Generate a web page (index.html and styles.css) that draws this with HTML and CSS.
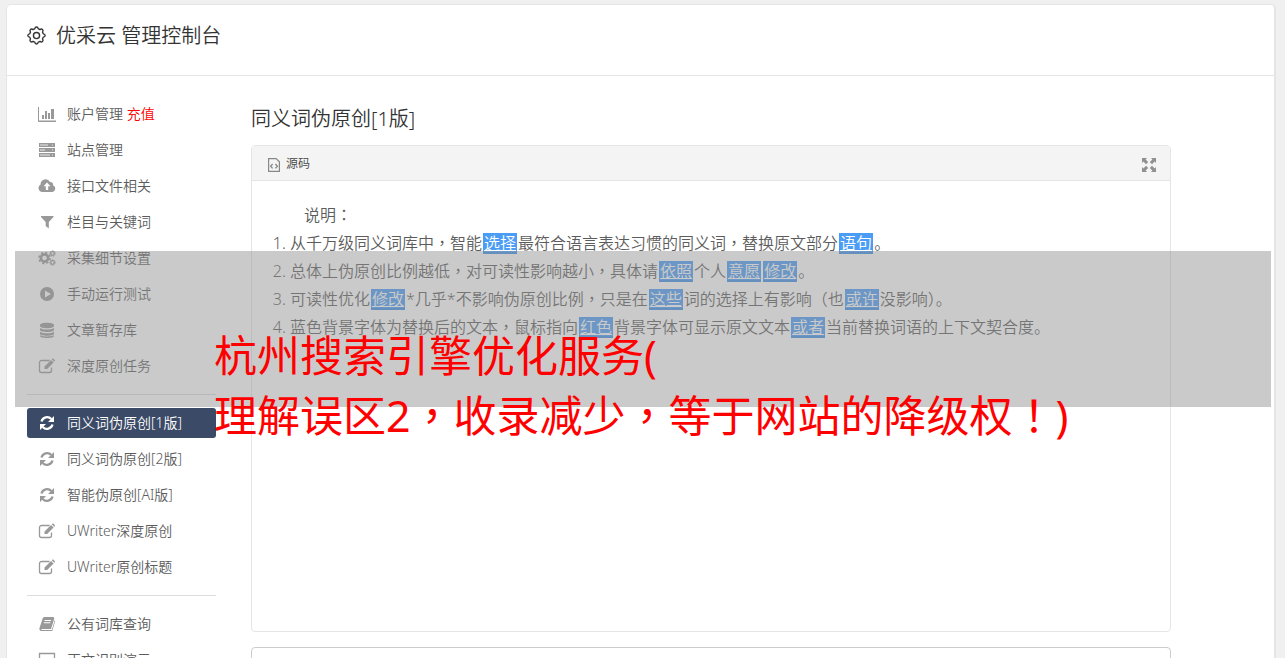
FILE: index.html
```html
<!DOCTYPE html>
<html lang="zh-CN">
<head>
  <meta charset="UTF-8">
  <title>优采云 管理控制台</title>
  <link rel="stylesheet" href="styles.css">
</head>
<body>

<!-- icons -->
<svg class="sprite" width="0" height="0">
  <symbol id="i-chart" viewBox="0 0 18 16"><path d="M.5 1v14.5H18M0 15h18" fill="none" stroke="currentColor"/><path d="M4 9h2v4H4zM7 5h2v8H7zM10 7h2v6h-2zM13 3h3v10h-3z"/></symbol>
  <symbol id="i-server" viewBox="0 0 18 16"><path d="M1 1h16v4H1zM1 6h16v4H1zM1 11h16v4H1z"/><path d="M2 3h8M2 8h5M2 13h10M14 3h1M14 8h1M14 13h1" stroke="#fff" opacity=".8"/></symbol>
  <symbol id="i-cloud" viewBox="0 0 18 16"><path fill-rule="evenodd" d="M4.500 14A4 4 0 0 1 2.600 6.500A5 5 0 0 1 12 4a2.700 2.700 0 0 1 3 3.300A3.500 3.500 0 0 1 14.500 14zM9 4.500 5.500 8.300h2.300V12h2.400V8.300h2.300z"/></symbol>
  <symbol id="i-filter" viewBox="0 0 18 16"><path d="M3 2h12.500v1l-4.700 5v6.500L7.700 12V8L3 3z"/></symbol>
  <symbol id="i-cogs" viewBox="0 0 18 16"><circle cx="6.500" cy="8" r="3.600" fill="none" stroke="currentColor" stroke-width="2.600"/><circle cx="6.500" cy="8" r="5.500" fill="none" stroke="currentColor" stroke-width="1.600" stroke-dasharray="2.160 2.160"/><circle cx="14.500" cy="3.500" r="1.800" fill="none" stroke="currentColor" stroke-width="1.300"/><circle cx="14.500" cy="3.500" r="2.800" fill="none" stroke="currentColor" stroke-dasharray="1.260 1.260"/><circle cx="14.500" cy="12.500" r="1.800" fill="none" stroke="currentColor" stroke-width="1.300"/><circle cx="14.500" cy="12.500" r="2.800" fill="none" stroke="currentColor" stroke-dasharray="1.260 1.260"/></symbol>
  <symbol id="i-play" viewBox="0 0 18 16"><path fill-rule="evenodd" d="M9 1a7 7 0 1 0 0 14A7 7 0 0 0 9 1zM7 4.500 13 8l-6 3.500z"/></symbol>
  <symbol id="i-db" viewBox="0 0 18 16"><path d="M2 3c0-3 14-3 14 0v1c0 3-14 3-14 0zM2 6c3 2 11 2 14 0v2c0 2.600-14 2.600-14 0zM2 9.700c3 2 11 2 14 0v2c0 2.600-14 2.600-14 0zM2 13.200c3 1.600 11 1.600 14 0v.8c0 2.600-14 2.600-14 0z"/></symbol>
  <symbol id="i-edit" viewBox="0 0 18 16"><path d="M11.500 2.500H3.500a2 2 0 0 0-2 2v8a2 2 0 0 0 2 2h8a2 2 0 0 0 2-2V9.500" fill="none" stroke="currentColor" stroke-width="1.300"/><path d="M6.500 8.500 13 2l2.600 2.600-6.500 6.500H6.500zM13.700 1.300l.8-.8c.6-.5 3 1.800 2.400 2.500l-.7.800z"/></symbol>
  <symbol id="i-sync" viewBox="0 0 18 16"><path d="M3.500 6.500A5.700 5.700 0 0 1 13.300 4M14.500 9.500A5.700 5.700 0 0 1 4.700 12" fill="none" stroke="currentColor" stroke-width="2.300"/><path d="M16 1v6h-6zM2 15V9h6z"/></symbol>
  <symbol id="i-book" viewBox="0 0 18 16"><path fill-rule="evenodd" d="M6 1h9.500l.8 1.500-3.300 10.500H4c-1 0-1 1 0 1h9.800L16.800 4l.4 1-3 10H3.500c-1.700 0-2.500-1.600-2-3L4.800 2zM6.700 4l-.3 1h6.500l.3-1zM6 6.300l-.3 1h6.500l.3-1z"/></symbol>
  <symbol id="i-screen" viewBox="0 0 18 16"><path d="M1.500 1.500h15v10h-15zM6 14.500h6" fill="none" stroke="currentColor" stroke-width="1.300"/></symbol>
  <symbol id="i-gear" viewBox="0 0 18 18"><path d="M7.400 2.600Q7.600.9 9 .9t1.600 1.700q1 .3 1.700.8 1.400-1 2.400 0t0 2.400q.5.800.7 1.700 1.800.2 1.800 1.500t-1.800 1.600q-.2.900-.7 1.600 1 1.400 0 2.400t-2.400 0q-.8.500-1.700.7-.2 1.700-1.600 1.700t-1.600-1.700q-.9-.2-1.700-.7-1.400 1-2.400 0t0-2.400q-.5-.7-.7-1.600Q.8 10.300.8 9t1.800-1.500q.2-.9.7-1.700-1-1.400 0-2.400t2.400 0q.8-.5 1.700-.8z" fill="none" stroke="currentColor" stroke-width="1.300" stroke-linejoin="round"/><circle cx="9" cy="9" r="2.900" fill="none" stroke="currentColor" stroke-width="1.300"/></symbol>
  <symbol id="i-code" viewBox="0 0 12 14"><path d="M.6.6h7.600l3.200 3.200v9.600H.6z" fill="none" stroke="currentColor" stroke-width="1.200"/><path d="m4.600 6-2 2.200 2 2.200M7.400 6l2 2.200-2 2.200" fill="none" stroke="currentColor" stroke-width="1.300"/></symbol>
  <symbol id="i-expand" viewBox="0 0 14 14"><path d="M0 0h5L3.600 1.400 6.200 4 4 6.200 1.400 3.600 0 5zM14 0v5l-1.400-1.400L10 6.200 7.800 4l2.600-2.600L9 0zM0 14V9l1.400 1.400L4 7.800 6.200 10l-2.600 2.600L5 14zM14 14H9l1.400-1.400L7.800 10 10 7.800l2.600 2.600L14 9z"/></symbol>
</svg>

<div class="page">
  <header class="top">
    <svg class="gear"><use href="#i-gear"/></svg>
    <h1>优采云 管理控制台</h1>
  </header>

  <div class="content">
    <nav class="menu">
      <a href="#"><svg><use href="#i-chart"/></svg><span>账户管理 <em>充值</em></span></a>
      <a href="#"><svg><use href="#i-server"/></svg>站点管理</a>
      <a href="#"><svg><use href="#i-cloud"/></svg>接口文件相关</a>
      <a href="#"><svg><use href="#i-filter"/></svg>栏目与关键词</a>
      <a href="#"><svg><use href="#i-cogs"/></svg>采集细节设置</a>
      <a href="#"><svg><use href="#i-play"/></svg>手动运行测试</a>
      <a href="#"><svg><use href="#i-db"/></svg>文章暂存库</a>
      <a href="#"><svg><use href="#i-edit"/></svg>深度原创任务</a>
      <hr>
      <a href="#" class="active"><svg><use href="#i-sync"/></svg>同义词伪原创[1版]</a>
      <a href="#"><svg><use href="#i-sync"/></svg>同义词伪原创[2版]</a>
      <a href="#"><svg><use href="#i-sync"/></svg>智能伪原创[AI版]</a>
      <a href="#"><svg><use href="#i-edit"/></svg>UWriter深度原创</a>
      <a href="#"><svg><use href="#i-edit"/></svg>UWriter原创标题</a>
      <hr>
      <a href="#"><svg><use href="#i-book"/></svg>公有词库查询</a>
      <a href="#"><svg><use href="#i-screen"/></svg>正文识别演示</a>
    </nav>

    <main class="main">
      <h2>同义词伪原创[1版]</h2>
      <div class="editor">
        <div class="toolbar">
          <button type="button"><svg class="code"><use href="#i-code"/></svg>源码</button>
          <button type="button" aria-label="全屏"><svg class="expand"><use href="#i-expand"/></svg></button>
        </div>
        <div class="text">
          <p>说明<i>：</i></p>
          <ol>
            <li>从千万级同义词库中<i>，</i>智能<a href="#">选择</a>最符合语言表达习惯的同义词<i>，</i>替换原文部分<a href="#">语句</a>。</li>
            <li>总体上伪原创比例越低<i>，</i>对可读性影响越小<i>，</i>具体请<a href="#">依照</a>个人<a href="#">意愿</a><a href="#">修改</a>。</li>
            <li>可读性优化<a href="#">修改</a>*几乎*不影响伪原创比例<i>，</i>只是在<a href="#">这些</a>词的选择上有影响<i>（</i>也<a href="#">或许</a>没影响<i>）</i>。</li>
            <li>蓝色背景字体为替换后的文本<i>，</i>鼠标指向<a href="#">红色</a>背景字体可显示原文文本<a href="#">或者</a>当前替换词语的上下文契合度。</li>
          </ol>
        </div>
      </div>
      <textarea class="result" aria-label="结果"></textarea>
    </main>
  </div>
</div>

<div class="band"></div>
<div class="caption">杭州搜索引擎优化服务(<br>理解误区2<i>，</i>收录减少<i>，</i>等于网站的降级权<i>！</i>)</div>

</body>
</html>
```
FILE: styles.css
```css
* { box-sizing: border-box; }
body { margin:0; padding:4px 9px 0 6px; height:100vh; overflow:hidden; position:relative; background:#f0f0f0; color:#5c5c5c; font-family:"Noto Sans", "Noto Sans CJK SC", sans-serif; font-weight:350; font-size:14px; }
svg { fill:currentColor; flex:none; }
.sprite { position:absolute; }
a { color:inherit; text-decoration:none; }
button { display:flex; align-items:center; gap:6px; padding:0; border:0; background:none; color:#444; font:inherit; font-size:12px; cursor:pointer; }
/* centred punctuation */
i { font-family:"Noto Sans CJK TC", sans-serif; font-style:normal; font-feature-settings:"locl" 0; line-height:1; }

.page { background:#fff; border:1px solid #e5e5e5; border-right-width:2px; border-radius:5px; }
.top { display:flex; align-items:center; gap:10px; height:71px; padding:0 20px 8px; border-bottom:1px solid #e5e5e5; color:#333; }
.top h1 { margin:0; font-size:20px; font-weight:350; line-height:28px; }
.gear { width:19px; height:19px; margin-bottom:2px; }
.content { display:flex; gap:35px; padding:23px 103px 0 20px; }

.menu { flex:none; width:189px; display:flex; flex-direction:column; gap:6px; }
.menu a { display:flex; align-items:center; gap:11px; height:30px; padding:0 0 2px 11px; border-radius:3px; white-space:nowrap; }
.menu svg { width:18px; height:16px; margin-top:2px; color:#999; }
.menu em { color:#f00; font-style:normal; }
.menu hr { width:100%; height:1px; margin:7px 0; border:0; background:#ddd; }
.menu .active { background:#3b4a66; color:#fff; }
.menu .active svg { color:#fff; }

.main { flex:1; min-width:0; }
.main h2 { margin:5px 0 11px; color:#333; font-size:20px; font-weight:350; line-height:30px; }
.editor { min-height:487px; border:1px solid #e5e5e5; border-radius:4px; }
.toolbar { display:flex; justify-content:space-between; align-items:center; height:35px; padding:0 14px 0 16px; background:#f4f4f4; border-bottom:1px solid #e5e5e5; }
.toolbar svg { margin-top:3px; }
.code { width:12px; height:14px; color:#888; }
.expand { width:14px; height:14px; color:#909090; }
.text { padding:20px; font-size:16px; line-height:28px; }
.text p { margin:0; text-indent:32px; }
.text ol { margin:0; padding-left:18px; }
.text li { white-space:nowrap; }
.text li a { display:inline-block; height:21px; margin:0 1px; padding:0 1px; background:#4b9cf5; border-bottom:2px solid #3f8ee6; color:#fff; line-height:21px; text-decoration:underline; }
.result { display:block; width:100%; height:120px; margin-top:15px; border:1px solid #ccc; border-radius:4px; resize:none; }

/* caption over the page */
.band { position:absolute; top:251px; left:15px; right:14px; height:156px; background:rgba(144,144,144,.48); }
.caption { position:absolute; top:326px; left:214px; color:#f00; font-size:43px; font-weight:400; line-height:60px; white-space:nowrap; }
```
